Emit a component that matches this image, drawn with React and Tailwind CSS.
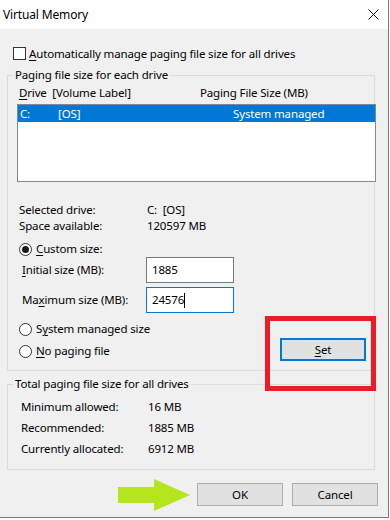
import React from "react";

function Radio({ checked }) {
  return (
    <span className="w-[13px] h-[13px] rounded-full border border-[#333] bg-white flex items-center justify-center shrink-0">
      {checked ? <span className="w-[7px] h-[7px] rounded-full bg-[#1a1a1a]" /> : null}
    </span>
  );
}

function U({ children }) {
  return <span className="underline underline-offset-[2px] decoration-[1px]">{children}</span>;
}

export default function App() {
  return (
    <div className="w-[390px] h-[520px] bg-white overflow-hidden relative font-['Noto_Sans',sans-serif] text-[11.5px] tracking-[-0.15px] leading-[16px] text-black">
      <div className="w-[389px] h-[518px] border-r border-b border-[#7a7a7a] flex flex-col">
        <div className="h-[29px] bg-white flex items-center justify-between pl-[3px] pr-[9px]">
          <span className="text-[12px]">Virtual Memory</span>
          <svg width="11" height="11" viewBox="0 0 11 11">
            <path d="M0.5 0.5 L10.5 10.5 M10.5 0.5 L0.5 10.5" stroke="#111" strokeWidth="1" fill="none" />
          </svg>
        </div>
        <div className="flex-1 bg-[#f0f0f0] flex flex-col">
          <div className="mt-[18px] ml-[13px] flex items-center h-[13px]">
            <span className="w-[13px] h-[13px] border border-[#333] bg-white shrink-0" />
            <span className="ml-[3px]"><U>A</U>utomatically manage paging file size for all drives</span>
          </div>

          <fieldset className="mt-[7px] ml-[7px] w-[368px] min-w-0 border border-[#dcdcdc] pb-[9px]">
            <legend className="ml-[5px] px-[2px] leading-[16px]">Paging file size for each drive</legend>
            <div className="mt-[2px] h-[16px] pl-[11px] flex items-center">
              <span className="w-[181px]"><U>D</U>rive&nbsp; [Volume Label]</span>
              <span>Paging File Size (MB)</span>
            </div>
            <div className="mt-[3px] ml-[9px] w-[359px] h-[78px] border border-[#828790] bg-white">
              <div className="h-[17px] bg-[#0078d7] text-white flex items-center">
                <span className="ml-[2px] w-[38px]">C:</span>
                <span className="w-[175px]">[OS]</span>
                <span>System managed</span>
              </div>
            </div>
            <div className="mt-[20px] pl-[11px] flex h-[16px] items-center">
              <span className="w-[128px]">Selected drive:</span>
              <span>C:&nbsp; [OS]</span>
            </div>
            <div className="pl-[11px] flex h-[16px] items-center">
              <span className="w-[128px]">Space available:</span>
              <span>120597 MB</span>
            </div>
            <div className="mt-[7px] pl-[11px] flex h-[16px] items-center">
              <Radio checked />
              <span className="ml-[4px]"><U>C</U>ustom size:</span>
            </div>
            <div className="pl-[14px] flex h-[26px] items-center">
              <span className="w-[124px]"><U>I</U>nitial size (MB):</span>
              <div className="w-[88px] h-[26px] border border-[#7a7a7a] bg-white flex items-center pl-[5px]">1885</div>
            </div>
            <div className="mt-[4px] pl-[14px] flex h-[26px] items-center">
              <span className="w-[124px]">Ma<U>x</U>imum size (MB):</span>
              <div className="w-[88px] h-[26px] border border-[#0078d7] bg-white flex items-center pl-[5px]">
                24576<span className="w-[1px] h-[15px] bg-black" />
              </div>
            </div>
            <div className="mt-[8px] flex items-start">
              <div className="flex flex-col pl-[11px]">
                <div className="flex h-[16px] items-center">
                  <Radio />
                  <span className="ml-[4px]">S<U>y</U>stem managed size</span>
                </div>
                <div className="mt-[6px] flex h-[16px] items-center">
                  <Radio />
                  <span className="ml-[4px]"><U>N</U>o paging file</span>
                </div>
              </div>
              <div className="ml-auto mr-[8px] mt-[17px] w-[86px] h-[23px] border-2 border-[#0078d7] bg-[#e1e1e1] flex items-center justify-center">
                <span><U>S</U>et</span>
              </div>
            </div>
          </fieldset>

          <fieldset className="mt-[5px] ml-[7px] w-[368px] min-w-0 border border-[#dcdcdc] pb-[12px]">
            <legend className="ml-[5px] px-[2px] leading-[16px]">Total paging file size for all drives</legend>
            <div className="mt-[7px] pl-[13px] flex flex-col gap-[5px]">
              <div className="flex h-[16px] items-center">
                <span className="w-[127px]">Minimum allowed:</span>
                <span>16 MB</span>
              </div>
              <div className="flex h-[16px] items-center">
                <span className="w-[127px]">Recommended:</span>
                <span>1885 MB</span>
              </div>
              <div className="flex h-[16px] items-center">
                <span className="w-[127px]">Currently allocated:</span>
                <span>6912 MB</span>
              </div>
            </div>
          </fieldset>

          <div className="mt-[13px] flex justify-end pr-[10px] gap-[9px]">
            <div className="w-[86px] h-[23px] border border-[#adadad] bg-[#e1e1e1] flex items-center justify-center">OK</div>
            <div className="w-[86px] h-[23px] border border-[#adadad] bg-[#e1e1e1] flex items-center justify-center">Cancel</div>
          </div>
        </div>
      </div>

      <div className="absolute left-[265px] top-[316px] w-[111px] h-[75px] border-[5px] border-[#ed1c24]" />
      <svg className="absolute left-[118px] top-[479px]" width="72" height="32" viewBox="0 0 72 32">
        <path d="M0 8 H36 V0 L72 16 L36 32 V24 H0 Z" fill="#b5e61d" />
      </svg>
    </div>
  );
}
